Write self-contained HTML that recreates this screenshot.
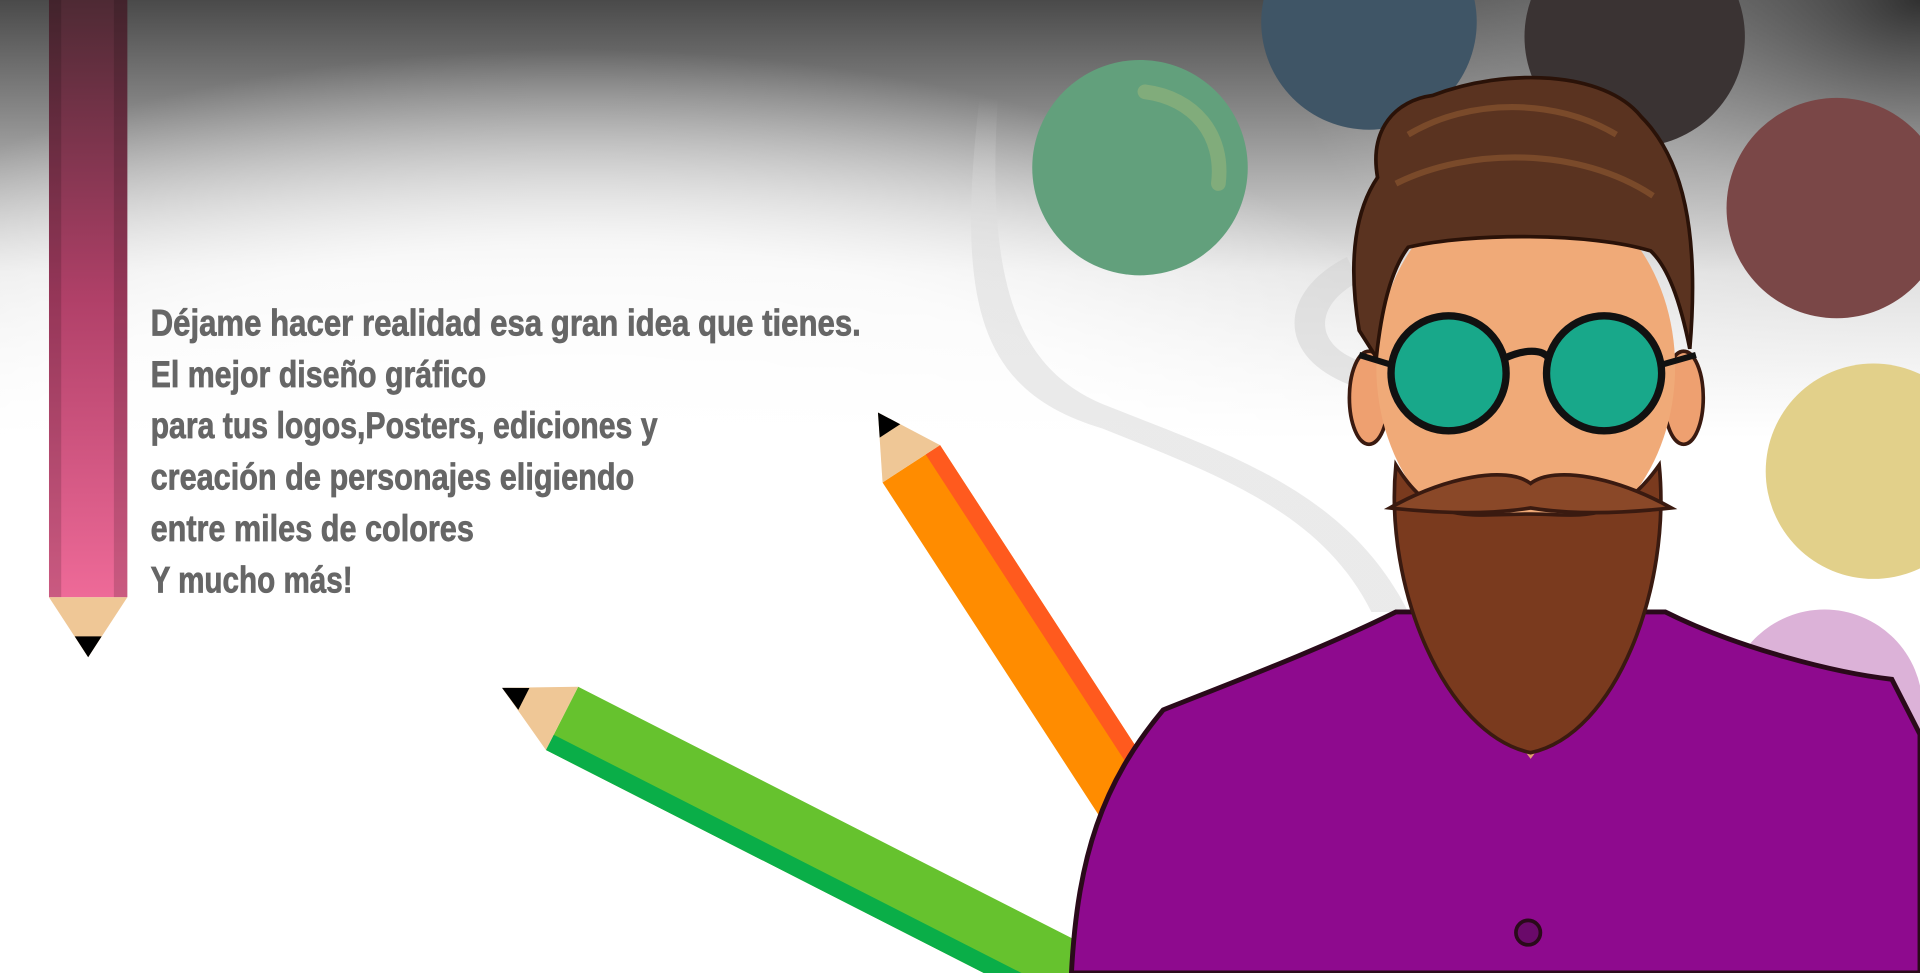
<!DOCTYPE html>
<html><head><meta charset="utf-8"><style>
html,body{margin:0;padding:0;width:1920px;height:973px;overflow:hidden;background:#fff}
svg{display:block;position:absolute;left:0;top:0}
</style></head><body>
<svg width="1920" height="973" viewBox="0 0 1568 795" preserveAspectRatio="none" xmlns="http://www.w3.org/2000/svg">
<defs>
<linearGradient id="bg" x1="0" y1="0" x2="0" y2="1">
<stop offset="0" stop-color="#4a4a4a"/><stop offset="0.12" stop-color="#8a8a8a"/><stop offset="0.28" stop-color="#e6e6e6"/><stop offset="0.45" stop-color="#fff"/><stop offset="1" stop-color="#fff"/>
</linearGradient>
<radialGradient id="rg" cx="0.3" cy="0.55" r="0.5">
<stop offset="0" stop-color="#fff" stop-opacity="1"/><stop offset="0.6" stop-color="#fff" stop-opacity="0.8"/><stop offset="1" stop-color="#fff" stop-opacity="0"/>
</radialGradient>
<radialGradient id="rt" cx="1" cy="0" r="0.6">
<stop offset="0" stop-color="#2a2a2a" stop-opacity="0.8"/><stop offset="0.5" stop-color="#bbb" stop-opacity="0.3"/><stop offset="1" stop-color="#fff" stop-opacity="0"/>
</radialGradient>
<linearGradient id="pk" x1="0" y1="0" x2="0" y2="1">
<stop offset="0" stop-color="#4e2a34"/><stop offset="0.5" stop-color="#b04068"/><stop offset="1" stop-color="#ee6a98"/>
</linearGradient>
<linearGradient id="sw" x1="0" y1="0" x2="0" y2="1">
<stop offset="0" stop-color="#ddd" stop-opacity="0"/><stop offset="0.3" stop-color="#ddd" stop-opacity="0.6"/><stop offset="1" stop-color="#ddd" stop-opacity="0.6"/>
</linearGradient>
</defs>
<rect width="1568" height="795" fill="url(#bg)"/>
<rect x="700" y="0" width="868" height="600" fill="url(#rt)"/>
<rect width="1568" height="795" fill="url(#rg)"/>
<path d="M800 80 C780 250 800 320 900 350 C1000 390 1080 420 1120 500 L1150 500 C1100 400 1000 370 900 330 C830 300 805 230 815 80Z" fill="url(#sw)"/>
<path d="M1100 210 C1040 240 1040 300 1120 320 L1130 300 C1070 290 1070 250 1110 230Z" fill="#d0d0d0" opacity="0.5"/>
<!-- bubbles -->
<circle cx="1118" cy="18" r="88" fill="#3f5566"/>
<circle cx="1335" cy="30" r="90" fill="#3a3333"/>
<circle cx="1500" cy="170" r="90" fill="#7a4747"/>
<circle cx="1530" cy="385" r="88" fill="#e2d08a"/>
<circle cx="1490" cy="578" r="80" fill="#dcb2d8"/>
<circle cx="931" cy="137" r="88" fill="#62a07c"/>
<path d="M935 75 C975 80 1000 110 995 150" stroke="#8fb07a" stroke-width="12" fill="none" stroke-linecap="round" opacity="0.7"/>
<!-- pink pencil -->
<rect x="40" y="0" width="64" height="488" fill="url(#pk)"/>
<rect x="40" y="0" width="10" height="488" fill="#000" opacity="0.15"/>
<rect x="93" y="0" width="11" height="488" fill="#000" opacity="0.15"/>
<polygon points="40,488 104,488 72,537" fill="#efc796"/>
<polygon points="61,520 83,520 72,537" fill="#000"/>
<!-- text -->
<g font-family="'Liberation Sans Narrow','Liberation Sans',sans-serif" font-weight="bold" font-size="30" fill="#666" stroke="#666" stroke-width="0.6">
<text x="123" y="274" textLength="580" lengthAdjust="spacingAndGlyphs">Déjame hacer realidad esa gran idea que tienes.</text>
<text x="123" y="316" textLength="274" lengthAdjust="spacingAndGlyphs">El mejor diseño gráfico</text>
<text x="123" y="358" textLength="414" lengthAdjust="spacingAndGlyphs">para tus logos,Posters, ediciones y</text>
<text x="123" y="400" textLength="395" lengthAdjust="spacingAndGlyphs">creación de personajes eligiendo</text>
<text x="123" y="442" textLength="264" lengthAdjust="spacingAndGlyphs">entre miles de colores</text>
<text x="123" y="484" textLength="165" lengthAdjust="spacingAndGlyphs">Y mucho más!</text>
</g>
<!-- orange pencil -->
<g transform="translate(717,337) rotate(57)">
<rect x="50" y="-28" width="600" height="56" fill="#ff8c00"/>
<rect x="50" y="-28" width="600" height="14" fill="#ff5a1e"/>
<polygon points="0,0 50,-28 50,28" fill="#efc796"/>
<polygon points="0,0 18,-10 18,10" fill="#000"/>
</g>
<!-- green pencil -->
<g transform="translate(410,562) rotate(27)">
<rect x="55" y="-29" width="600" height="58" fill="#66c22e"/>
<rect x="55" y="15" width="600" height="14" fill="#0aae48"/>
<polygon points="0,0 55,-29 55,29" fill="#efc796"/>
<polygon points="0,0 20,-10 20,10" fill="#000"/>
</g>
<!-- man -->
<path d="M875 795 C880 700 900 640 950 580 C1000 560 1080 530 1140 500 L1360 500 C1420 530 1500 550 1545 555 L1568 600 L1568 795Z" fill="#8e0a8e" stroke="#2a0a1a" stroke-width="4"/>
<path d="M1180 440 L1320 440 L1310 540 L1250 620 L1190 540Z" fill="#e2a070"/>
<ellipse cx="1118" cy="325" rx="16" ry="38" fill="#eea070" stroke="#3a1a10" stroke-width="3"/>
<ellipse cx="1375" cy="325" rx="16" ry="38" fill="#eea070" stroke="#3a1a10" stroke-width="3"/>
<ellipse cx="1246" cy="300" rx="122" ry="150" fill="#f0aa78"/>
<path d="M1140 380 C1130 480 1180 600 1250 615 C1320 600 1365 480 1355 380 C1320 430 1290 420 1250 420 C1200 420 1170 430 1140 380Z" fill="#7a3a1e" stroke="#3a1a10" stroke-width="3"/>
<path d="M1135 415 C1180 390 1230 380 1250 395 C1270 380 1320 390 1365 415 C1320 420 1280 420 1250 415 C1220 420 1180 420 1135 415Z" fill="#8a4828" stroke="#3a1a10" stroke-width="3"/>
<path d="M1110 270 C1100 210 1108 170 1125 145 C1118 105 1140 82 1170 78 C1230 55 1310 58 1340 95 C1375 130 1388 190 1380 285 C1372 245 1362 218 1348 205 C1300 190 1200 190 1150 202 C1135 222 1128 255 1124 292 Z" fill="#5a3320" stroke="#2a1208" stroke-width="3"/>
<path d="M1150 110 C1200 80 1270 80 1320 110 M1140 150 C1200 120 1290 120 1350 160" stroke="#7a4a2a" stroke-width="5" fill="none"/>
<circle cx="1183" cy="305" r="47" fill="#18a88a" stroke="#111" stroke-width="6"/>
<circle cx="1310" cy="305" r="47" fill="#18a88a" stroke="#111" stroke-width="6"/>
<path d="M1228 293 C1245 285 1260 285 1265 293" stroke="#111" stroke-width="6" fill="none"/>
<line x1="1136" y1="298" x2="1110" y2="290" stroke="#111" stroke-width="5"/>
<line x1="1357" y1="298" x2="1385" y2="290" stroke="#111" stroke-width="5"/>
<circle cx="1248" cy="762" r="10" fill="#6a0a6a" stroke="#2a0a1a" stroke-width="3"/>
</svg>
</body></html>
